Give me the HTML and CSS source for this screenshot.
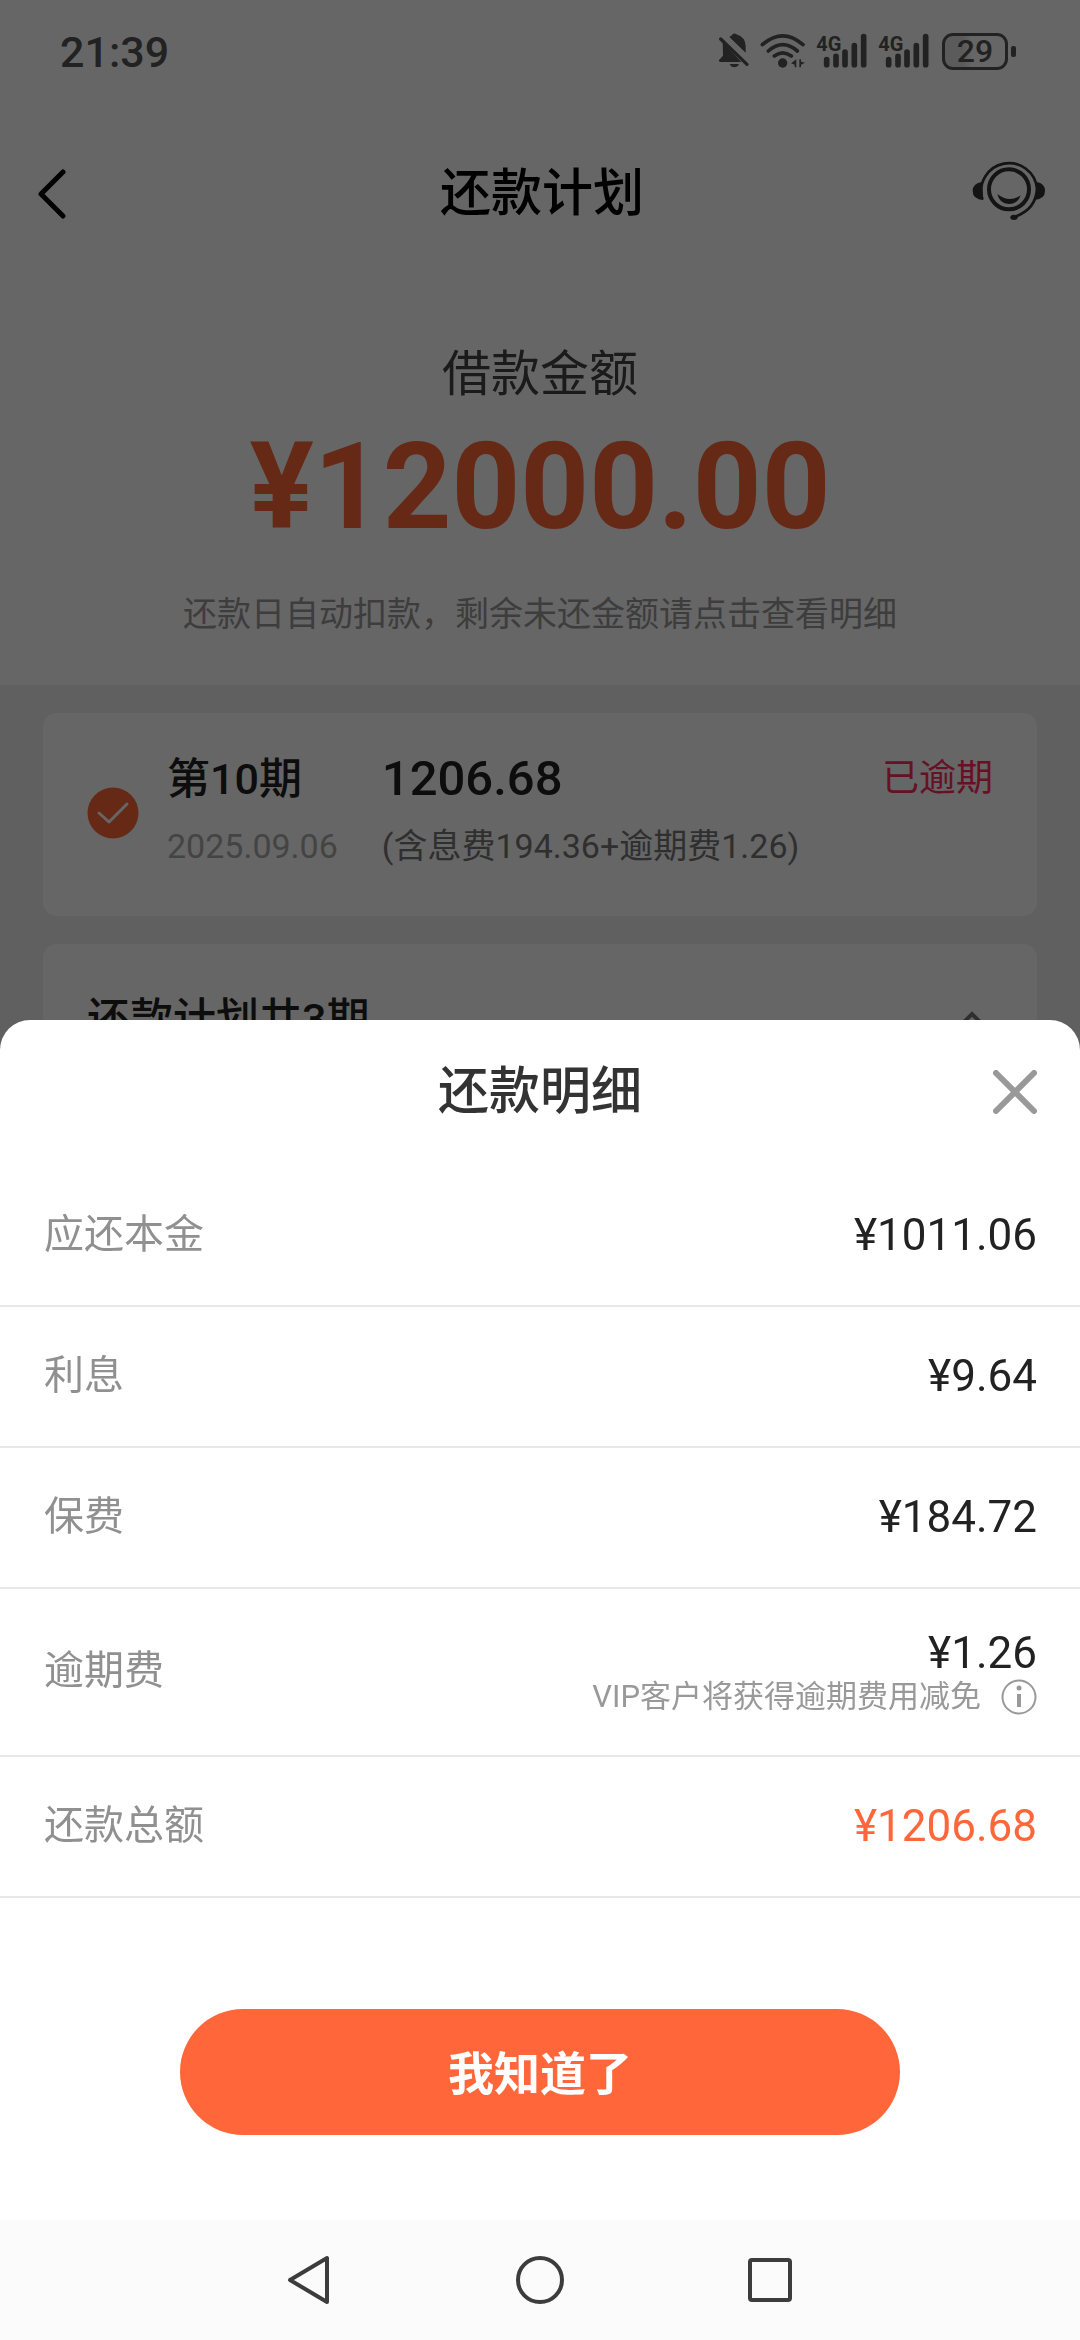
FILE: index.html
```html
<!DOCTYPE html>
<html lang="zh-CN">
<head>
<meta charset="utf-8">
<meta name="viewport" content="width=device-width, initial-scale=1">
<title>还款计划</title>
<link rel="stylesheet" href="styles.css">
</head>
<body>
<div class="page">
  <div class="status-bar">
    <time class="clock">21:39</time>
    <div class="status-icons">
      <svg width="32" height="36" viewBox="28 38 96 108" fill="currentColor">
        <path d="M62 50Q70 46 72 42Q77 37 83 42Q110 50 111 78V97Z"/>
        <path d="M42 66L98 125H34Q27 121 34 116L43 106Z"/>
        <path d="M63 131H91Q87 141 77 141Q67 141 63 131Z"/>
        <path d="M36 56L115 132" stroke="currentColor" stroke-width="10" stroke-linecap="round"/>
      </svg>
      <svg width="46" height="36" viewBox="154 38 138 108" fill="none" stroke="currentColor" stroke-width="11" stroke-linecap="round">
        <path d="M161 73Q222 20 283 73M179 92Q222 54 266 92M197 107Q222 88 248 107"/>
        <g fill="currentColor" stroke="none">
          <circle cx="222" cy="128" r="14"/>
          <path d="M263 117V141H258V133L247 129ZM272 117V141H277V133L289 127L277 124V117Z"/>
        </g>
      </svg>
      <svg width="52" height="52" viewBox="322 14 156 156">
        <text class="net" x="323" y="91">4G</text>
        <path d="M354 118V133M382 108V133M409 95V133M437 76V133M465 49V133" stroke="currentColor" stroke-width="17" stroke-linecap="round"/>
      </svg>
      <svg width="52" height="52" viewBox="322 14 156 156">
        <text class="net" x="323" y="91">4G</text>
        <path d="M354 118V133M382 108V133M409 95V133M437 76V133M465 49V133" stroke="currentColor" stroke-width="17" stroke-linecap="round"/>
      </svg>
      <div class="battery"><span class="battery-level">29</span></div>
    </div>
  </div>

  <header class="nav">
    <button class="icon-button back" aria-label="返回">
      <svg width="28" height="50" viewBox="0 0 28 50" fill="none" stroke="currentColor" stroke-width="5" stroke-linecap="round" stroke-linejoin="round"><path d="M25 3L3 25L25 47"/></svg>
    </button>
    <h1 class="title">还款计划</h1>
    <button class="icon-button service" aria-label="客服">
      <svg width="74" height="72" viewBox="36 36 222 216" fill="none" stroke="currentColor">
        <path d="M67 160A84 84 0 1 1 231 128Q228 190 165 212" stroke-width="8"/>
        <circle cx="147" cy="130" r="60" stroke-width="12"/>
        <g fill="currentColor" stroke="none">
          <path d="M66 108Q38 112 38 135Q38 160 70 162L68 135ZM230 108Q255 112 255 135Q255 159 224 162L231 135Z"/>
          <path d="M112 144Q147 172 182 148Q174 174 147 174Q118 173 112 144Z"/>
          <ellipse cx="162" cy="214" rx="11" ry="8"/>
        </g>
      </svg>
    </button>
  </header>

  <section class="summary">
    <p class="summary-label">借款金额</p>
    <p class="summary-amount">¥12000.00</p>
    <p class="summary-note">还款日自动扣款，剩余未还金额请点击查看明细</p>
  </section>

  <main class="plans">
    <article class="card period">
      <svg class="check" width="52" height="52" viewBox="0 0 52 52" fill="none"><circle cx="26" cy="26" r="25.500" fill="#ff6639"/><path d="M12 26L22 35L40 17" stroke="#fff" stroke-width="3" stroke-linecap="round" stroke-linejoin="round"/></svg>
      <div class="period-when">
        <h2 class="period-name">第10期</h2>
        <time class="period-date">2025.09.06</time>
      </div>
      <div class="period-sum">
        <p class="period-amount">1206.68</p>
        <p class="period-fee">(含息费194.36+逾期费1.26)</p>
      </div>
      <span class="period-state">已逾期</span>
    </article>
    <article class="card total">
      <h2 class="total-name">还款计划共3期</h2>
      <svg class="chevron" width="26" height="16" viewBox="0 0 26 16" fill="none" stroke="currentColor" stroke-width="4"><path d="M2 14L13 3L24 14"/></svg>
    </article>
  </main>
</div>

<div class="overlay">
  <section class="sheet" role="dialog" aria-labelledby="sheet-title">
    <header class="sheet-head">
      <h2 class="title sheet-title" id="sheet-title">还款明细</h2>
      <button class="icon-button close" aria-label="关闭">
        <svg width="44" height="44" viewBox="0 0 44 44" stroke="currentColor" stroke-width="6" stroke-linecap="round"><path d="M3 3L41 41M41 3L3 41"/></svg>
      </button>
    </header>
    <dl class="details">
      <div class="row"><dt>应还本金</dt><dd>¥1011.06</dd></div>
      <div class="row"><dt>利息</dt><dd>¥9.64</dd></div>
      <div class="row"><dt>保费</dt><dd>¥184.72</dd></div>
      <div class="row row-tall">
        <dt>逾期费</dt>
        <dd>¥1.26
          <span class="hint">VIP客户将获得逾期费用减免
            <svg width="36" height="36" viewBox="0 0 36 36" fill="none" stroke="currentColor" stroke-width="2"><circle cx="18" cy="18" r="16.500"/><path d="M18 15V28" stroke-width="4"/><circle cx="18" cy="9" r="2.500" fill="currentColor" stroke="none"/></svg>
          </span>
        </dd>
      </div>
      <div class="row row-total"><dt>还款总额</dt><dd>¥1206.68</dd></div>
    </dl>
    <button class="confirm">我知道了</button>
  </section>
  <nav class="system-nav">
    <button class="icon-button" aria-label="后退"><svg width="48" height="52" viewBox="0 0 48 52" fill="none" stroke="currentColor" stroke-width="4" stroke-linejoin="round"><path d="M41 4V48L4 26Z"/></svg></button>
    <button class="icon-button" aria-label="主页"><svg width="48" height="52" viewBox="0 0 48 52" fill="none" stroke="currentColor" stroke-width="4"><circle cx="24" cy="26" r="22"/></svg></button>
    <button class="icon-button" aria-label="最近任务"><svg width="48" height="52" viewBox="0 0 48 52" fill="none" stroke="currentColor" stroke-width="4"><rect x="4" y="6" width="40" height="40" rx="2"/></svg></button>
  </nav>
</div>
</body>
</html>
```
FILE: styles.css
```css
* {
  box-sizing: border-box;
}

body {
  margin: 0;
  background: #f0f0f0;
  color: #222;
  font-family: Roboto, "Noto Sans CJK SC", sans-serif;
}

h1, h2, p, dl, dd {
  margin: 0;
}

svg {
  display: block;
}

.icon-button {
  padding: 0;
  border: 0;
  background: none;
  color: inherit;
}

.title {
  font-size: 51px;
  line-height: 76px;
  font-weight: 500;
}

/* Page behind the sheet */

.page {
  height: 100vh;
  overflow: hidden;
}

.status-bar {
  display: flex;
  align-items: center;
  justify-content: space-between;
  height: 104px;
  padding: 0 64px 0 60px;
  background: #fff;
  color: #555;
}

.clock {
  font-size: 43px;
  font-weight: 500;
}

.status-icons {
  display: flex;
  align-items: center;
  gap: 10px;
  padding-bottom: 2px;
}

.net {
  fill: currentColor;
  font-size: 60px;
  font-weight: 700;
}

.battery {
  position: relative;
  width: 66px;
  height: 37px;
  margin: 0 8px 0 2px;
  border: 3px solid currentColor;
  border-radius: 11px;
  background: linear-gradient(90deg, #e4e4e4 30%, #fff 45%);
  text-align: center;
}

.battery::after {
  content: "";
  position: absolute;
  top: 10px;
  right: -11px;
  width: 5px;
  height: 11px;
  border-radius: 2px;
  background: currentColor;
}

.battery-level {
  display: block;
  font-size: 32px;
  line-height: 31px;
  font-weight: 500;
}

.nav {
  display: flex;
  align-items: center;
  justify-content: space-between;
  height: 180px;
  padding: 0 34px 0 38px;
  background: #fff;
  color: #000;
}

.nav .icon-button {
  display: flex;
  width: 76px;
}

.nav .service {
  justify-content: flex-end;
  color: #333;
}

.summary {
  padding: 55px 40px 46px;
  background: #fff;
  text-align: center;
}

.summary-label {
  font-size: 49px;
  line-height: 72px;
  color: #444;
}

.summary-amount {
  font-size: 120px;
  line-height: 152px;
  font-weight: 700;
  color: #ff6639;
}

.summary-note {
  margin-top: 26px;
  font-size: 34px;
  line-height: 50px;
  color: #999;
}

.plans {
  display: grid;
  gap: 28px;
  padding: 28px 43px;
}

.card {
  display: flex;
  padding: 33px 44px;
  border-radius: 14px;
  background: #fff;
}

.period {
  min-height: 203px;
}

.check {
  margin: 41px 28px 0 0;
}

.period-when {
  margin-right: 44px;
}

.period-name,
.total-name {
  font-size: 43px;
  line-height: 66px;
  font-weight: 500;
}

.period-date {
  display: block;
  font-size: 34px;
  line-height: 68px;
  color: #aaa;
}

.period-amount {
  font-size: 49px;
  line-height: 66px;
  font-weight: 500;
}

.period-fee {
  font-size: 34px;
  line-height: 68px;
  color: #777;
}

.period-state {
  margin-left: auto;
  font-size: 37px;
  line-height: 66px;
  color: #ff2d5f;
}

.total {
  align-items: center;
  justify-content: space-between;
  padding: 42px 52px 42px 44px;
}

.chevron {
  color: #777;
}

/* Detail sheet */

.overlay {
  position: fixed;
  inset: 0;
  display: flex;
  flex-direction: column;
  justify-content: flex-end;
  background: rgba(0, 0, 0, 0.6);
}

.sheet {
  display: flex;
  flex-direction: column;
  align-items: center;
  padding-bottom: 85px;
  border-radius: 30px 30px 0 0;
  background: #fff;
}

.sheet-head {
  display: grid;
  grid-template-columns: 1fr auto 1fr;
  align-items: center;
  width: 100%;
  height: 146px;
  padding: 0 43px 2px;
}

.sheet-title {
  grid-column: 2;
  color: #333;
}

.close {
  justify-self: end;
  color: #999;
}

.details {
  width: 100%;
}

.row {
  display: flex;
  align-items: center;
  justify-content: space-between;
  height: 141px;
  padding: 0 43px 2px 44px;
  border-bottom: 2px solid #e8e8e8;
}

.row-tall {
  height: 168px;
}

.row dt {
  font-size: 40px;
  line-height: 60px;
  color: #909090;
}

.row dd {
  font-size: 44px;
  line-height: 44px;
  text-align: right;
}

.row-tall dd {
  padding-top: 8px;
}

.row-total dd {
  color: #ff6639;
}

.hint {
  display: flex;
  align-items: center;
  gap: 20px;
  font-size: 31px;
  color: #999;
}

.confirm {
  width: 66.667%;
  height: 126px;
  margin-top: 111px;
  padding: 0 0 4px;
  border: 0;
  border-radius: 63px;
  background: #ff6639;
  color: #fff;
  font: inherit;
  font-size: 46px;
  font-weight: 700;
}

.system-nav {
  display: flex;
  align-items: center;
  justify-content: center;
  gap: 182px;
  height: 120px;
  background: #fbfbfb;
  color: #3c3c3c;
}
```
